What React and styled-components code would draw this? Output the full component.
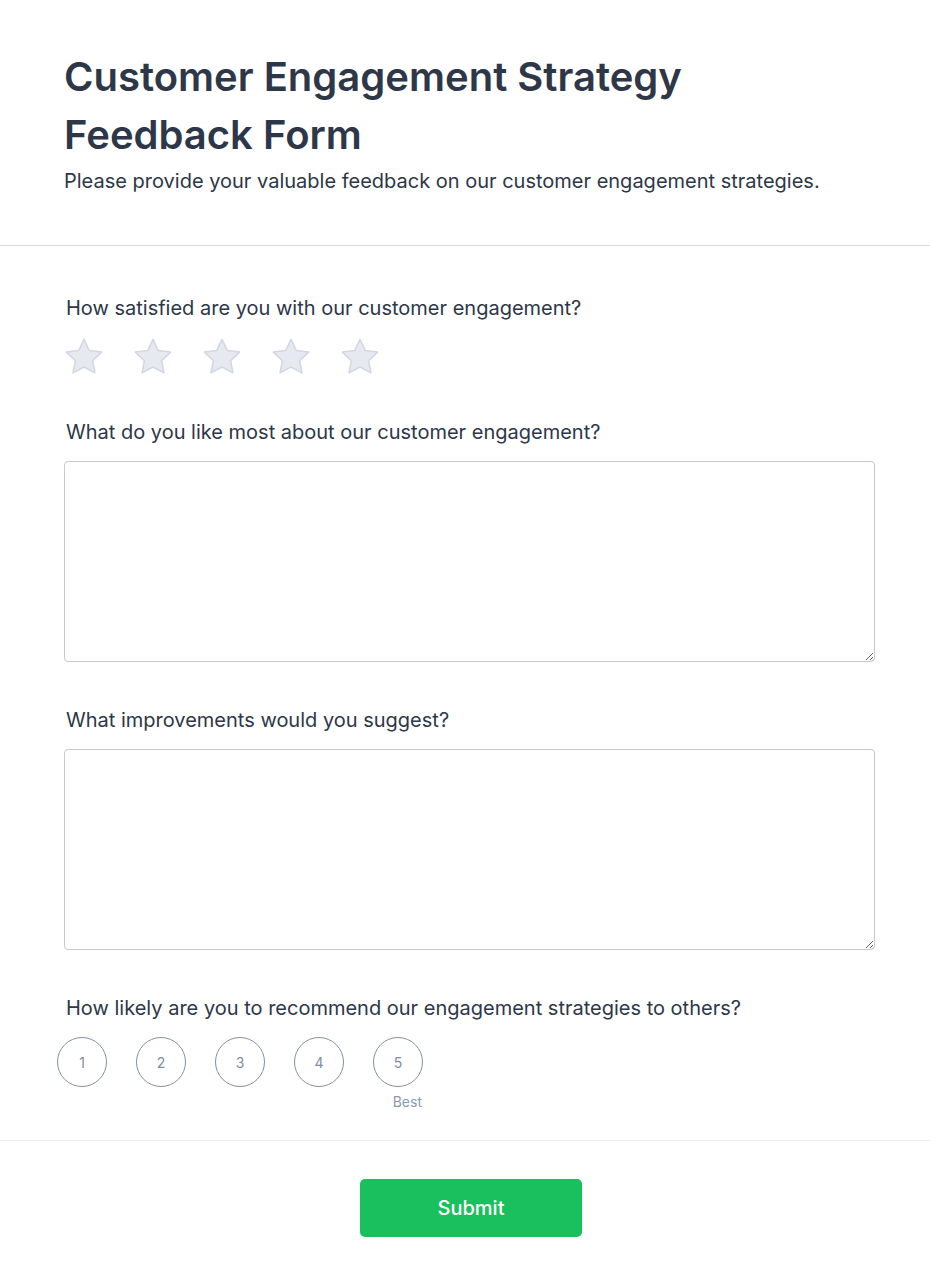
import React from "react";
import styled, { createGlobalStyle } from "styled-components";

const Global = createGlobalStyle`
  html, body { margin: 0; padding: 0; background: #ffffff; }
  body { font-family: Inter, "Noto Sans", sans-serif; color: #2d3748; }
  * { box-sizing: border-box; }
`;

const Page = styled.div`
  width: 930px;
  background: #fff;
`;

const Header = styled.header`
  padding: 48px 64px 49px;
  border-bottom: 1px solid #d9dae2;
`;

const Title = styled.h1`
  margin: 0;
  max-width: 700px;
  font-size: 40px;
  line-height: 58px;
  font-weight: 600;
  color: #2d3748;
`;

const Subtitle = styled.p`
  margin: 2px 0 0;
  font-size: 20px;
  line-height: 30px;
  color: #2d3748;
`;

const Form = styled.form`
  padding: 47px 55px 30px 64px;
  display: flex;
  flex-direction: column;
  gap: 43px;
  border-bottom: 1px solid #e8eaf0;
`;

const Field = styled.div`
  display: flex;
  flex-direction: column;
  gap: ${(p) => p.$gap || 14}px;
`;

const Label = styled.label`
  padding-left: 2px;
  font-size: 20px;
  line-height: 30px;
  font-weight: 400;
  color: #2d3748;
`;

const Stars = styled.div`
  display: flex;
  gap: 31px;
  height: 36px;
  padding-left: 1px;
`;

const StarButton = styled.button`
  width: 38px;
  height: 36px;
  padding: 0;
  border: none;
  background: none;
  cursor: pointer;
  display: flex;
`;

const TextArea = styled.textarea`
  width: 811px;
  height: 201px;
  border: 1px solid #c6c8d6;
  border-radius: 4px;
  font-family: inherit;
  font-size: 16px;
  padding: 10px;
  resize: vertical;
  outline: none;
  display: block;
`;

const Scale = styled.div`
  display: flex;
  gap: 29px;
  margin-left: -7px;
`;

const ScaleItem = styled.div`
  display: flex;
  flex-direction: column;
  align-items: flex-end;
  gap: 6px;
`;

const Circle = styled.button`
  width: 50px;
  height: 50px;
  border-radius: 50%;
  border: 1px solid #838ea6;
  background: #fff;
  color: #7d8ea6;
  font-family: Inter, sans-serif;
  font-size: 14px;
  display: flex;
  align-items: center;
  justify-content: center;
  cursor: pointer;
  padding: 0;
`;

const Hint = styled.span`
  font-size: 14px;
  line-height: 17px;
  color: #8a9bb0;
  height: 17px;
  margin-right: 1px;
`;

const Footer = styled.div`
  display: flex;
  justify-content: center;
  padding: 38px 0 49px 12px;
`;

const Submit = styled.button`
  width: 222px;
  height: 58px;
  border: none;
  border-radius: 5px;
  background: #1abf5e;
  color: #fff;
  font-family: Inter, sans-serif;
  font-size: 20px;
  font-weight: 500;
  cursor: pointer;
`;

const Star = () => (
  <svg width="38" height="36" viewBox="2.4 2 19.2 18.4">
    <path
      d="M12 2.7l2.7 5.7 6.3.8-4.6 4.4 1.2 6.2L12 16.8l-5.6 3 1.2-6.2L3 9.2l6.3-.8z"
      fill="#e7e9f1"
      stroke="#d3d7e3"
      strokeWidth="0.8"
      strokeLinejoin="round"
    />
  </svg>
);

export default function App() {
  return (
    <Page>
      <Global />
      <Header>
        <Title>Customer Engagement Strategy Feedback Form</Title>
        <Subtitle>Please provide your valuable feedback on our customer engagement strategies.</Subtitle>
      </Header>
      <Form onSubmit={(e) => e.preventDefault()}>
        <Field $gap={15}>
          <Label>How satisfied are you with our customer engagement?</Label>
          <Stars>
            {[1, 2, 3, 4, 5].map((n) => (
              <StarButton type="button" key={n} aria-label={`${n} star`}>
                <Star />
              </StarButton>
            ))}
          </Stars>
        </Field>
        <Field>
          <Label>What do you like most about our customer engagement?</Label>
          <TextArea />
        </Field>
        <Field>
          <Label>What improvements would you suggest?</Label>
          <TextArea />
        </Field>
        <Field>
          <Label>How likely are you to recommend our engagement strategies to others?</Label>
          <Scale>
            {[1, 2, 3, 4, 5].map((n) => (
              <ScaleItem key={n}>
                <Circle type="button">{n}</Circle>
                <Hint>{n === 5 ? "Best" : ""}</Hint>
              </ScaleItem>
            ))}
          </Scale>
        </Field>
      </Form>
      <Footer>
        <Submit type="submit">Submit</Submit>
      </Footer>
    </Page>
  );
}
